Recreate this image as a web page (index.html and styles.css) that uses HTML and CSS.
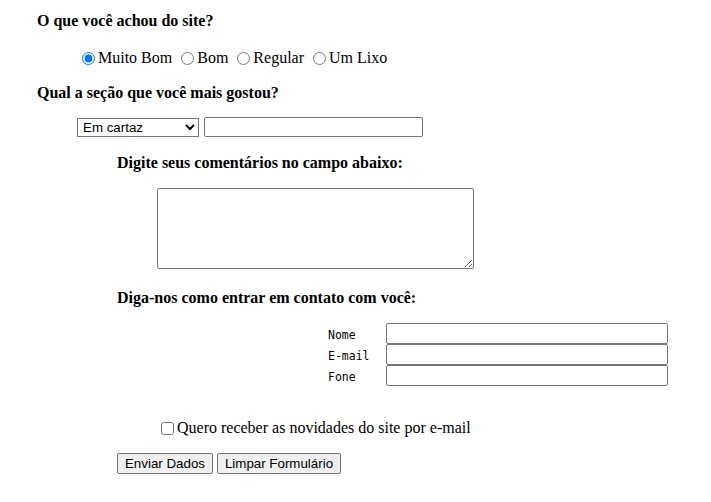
FILE: index.html
```html
<!DOCTYPE html>
<html lang="pt-BR">
<head>
<meta charset="utf-8">
<title>Formulário</title>
<link rel="stylesheet" href="styles.css">
</head>
<body>
<form class="form">
  <div class="heading h1">O que você achou do site?</div>
  <div class="row radios">
    <label class="opt"><input type="radio" name="nota" checked>Muito Bom</label>
    <label class="opt"><input type="radio" name="nota">Bom</label>
    <label class="opt"><input type="radio" name="nota">Regular</label>
    <label class="opt"><input type="radio" name="nota">Um Lixo</label>
  </div>
  <div class="heading h2">Qual a seção que você mais gostou?</div>
  <div class="row pick">
    <select class="sel"><option>Em cartaz</option><option>Estreias</option><option>Promoções</option></select>
    <input type="text" class="txt">
  </div>
  <div class="heading h3">Digite seus comentários no campo abaixo:</div>
  <textarea class="comments"></textarea>
  <div class="heading h4">Diga-nos como entrar em contato com você:</div>
  <div class="contact">
    <label class="clabel" for="nome">Nome</label><input id="nome" type="text" class="cinput">
    <label class="clabel" for="email">E-mail</label><input id="email" type="text" class="cinput">
    <label class="clabel" for="fone">Fone</label><input id="fone" type="text" class="cinput">
  </div>
  <label class="row news"><input type="checkbox" class="chk">Quero receber as novidades do site por e-mail</label>
  <div class="row actions">
    <button type="submit" class="btn b1">Enviar Dados</button>
    <button type="reset" class="btn b2">Limpar Formulário</button>
  </div>
</form>
</body>
</html>
```

FILE: styles.css
```css
html, body {
  margin: 0;
  padding: 0;
  background: #ffffff;
}
body {
  font-family: "Liberation Serif", "Times New Roman", serif;
  font-size: 16px;
  color: #000;
}
.form {
  display: flex;
  flex-direction: column;
  align-items: flex-start;
}
.heading {
  font-weight: bold;
  height: 18px;
  line-height: 18px;
  white-space: nowrap;
}
.h1 { margin: 12px 0 0 37px; }
.h2 { margin: 16px 0 0 37px; }
.h3 { margin: 17px 0 0 117px; }
.h4 { margin: 20px 0 0 117px; }

.row {
  display: flex;
  align-items: center;
}
.radios {
  height: 20px;
  margin: 18px 0 0 77px;
}
.opt {
  display: flex;
  align-items: center;
  margin-right: 4px;
  line-height: 20px;
}
.opt input {
  width: 13px;
  height: 13px;
  margin: 0 3px 0 5px;
}
.pick {
  height: 20px;
  margin: 15px 0 0 77px;
}
.sel {
  width: 122px;
  height: 19px;
  margin: 0 5px 0 0;
  font-family: "Liberation Sans", Arial, sans-serif;
  font-size: 13.33px;
  border: 1px solid #767676;
  border-radius: 0;
  background: #fff;
  color: #000;
  padding: 0 0 0 1px;
}
.txt {
  box-sizing: border-box;
  width: 219px;
  height: 20px;
  margin: 0;
  border: 1px solid #767676;
  border-radius: 2px;
  font-family: "Liberation Sans", Arial, sans-serif;
  font-size: 13.33px;
}
.comments {
  box-sizing: border-box;
  width: 317px;
  height: 81px;
  margin: 16px 0 0 157px;
  border: 1px solid #767676;
  border-radius: 2px;
  padding: 2px;
  font-family: "Liberation Mono", monospace;
  font-size: 13.33px;
}
.contact {
  display: grid;
  grid-template-columns: 58px 282px;
  grid-auto-rows: 21px;
  margin: 16px 0 0 328px;
}
.clabel {
  font-family: "DejaVu Sans Mono", "Liberation Mono", monospace;
  font-size: 11.5px;
  line-height: 24px;
  height: 21px;
  color: #000;
}
.cinput {
  box-sizing: border-box;
  width: 282px;
  height: 21px;
  margin: 0;
  border: 1px solid #767676;
  border-radius: 2px;
  font-family: "Liberation Sans", Arial, sans-serif;
  font-size: 13.33px;
}
.news {
  height: 20px;
  margin: 32px 0 0 156px;
}
.chk {
  width: 13px;
  height: 13px;
  margin: 0 3px 0 5px;
}
.actions {
  height: 21px;
  margin: 15px 0 0 117px;
  gap: 4px;
}
.btn {
  box-sizing: border-box;
  height: 21px;
  margin: 0;
  padding: 0 6px;
  font-family: "Liberation Sans", Arial, sans-serif;
  font-size: 13.33px;
  color: #000;
  background: #efefef;
  border: 1px solid #767676;
  border-radius: 2px;
}
.b1 { width: 96px; }
.b2 { width: 124px; }
```
